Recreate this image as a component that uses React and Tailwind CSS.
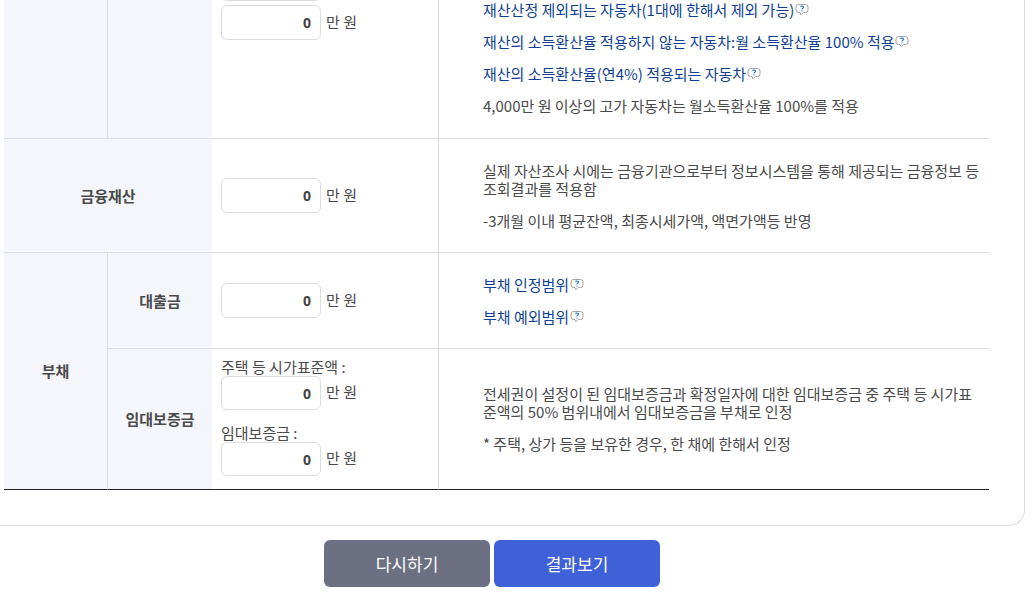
import { useState } from "react";

function HelpLink({ children }) {
  return (
    <a href="#help" className="flex items-start gap-px text-[#0f3f94]">
      <span>{children}</span>
      <svg width="14" height="12" viewBox="0 0 14 12" fill="none" className="mt-[3px] shrink-0" aria-hidden="true">
        <path
          d="M3.5 0.5h7a2.5 2.5 0 0 1 2.5 2.5v3a2.5 2.5 0 0 1-2.5 2.5H8.2L6 10.8 5 8.5H3.5A2.5 2.5 0 0 1 1 6V3A2.5 2.5 0 0 1 3.5 0.5z"
          fill="#fff"
          stroke="#a3a3a3"
        />
        <path d="M5.4 2.6C6.2 1.7 8.6 1.9 8.5 3.3C8.4 4.3 7 4.3 7 5.4M7 6.4v1.1" stroke="#2a7fd4" strokeWidth="1.2" />
      </svg>
    </a>
  );
}

function AmountInput({ id, label, compact, unit = "만 원" }) {
  const [value, setValue] = useState("0");

  return (
    <div className="flex items-center gap-[5px]">
      <input
        id={id}
        type="text"
        inputMode="numeric"
        aria-label={label}
        value={value}
        onChange={(e) => setValue(e.target.value)}
        className={`${compact ? "h-[34px]" : "h-[35px]"} w-[100px] rounded-md border border-[#dddddd] bg-white px-[9px] text-right font-['Noto_Sans',sans-serif] text-sm font-bold text-[#444444]`}
      />
      {unit && <span className="pb-0.5">{unit}</span>}
    </div>
  );
}

const headCell = "border-b border-[#dcdde1] bg-[#f5f6fc] text-center align-middle font-bold";
const inputCell = "border-r border-b border-[#dddddd] pl-[9px]";
const noteCell = "border-b border-[#dddddd] pl-11";

function App() {
  return (
    <main className="overflow-hidden bg-white font-['Noto_Sans_CJK_KR','Noto_Sans',sans-serif] text-[15px] leading-[18px] text-[#4a4a4a]">
      <section className="-mt-[34px] mr-2.5 rounded-br-2xl border-r border-b border-[#dddddd] pr-[35px] pb-[35px] pl-1">
        <table className="w-full table-fixed border-separate border-spacing-0">
          <colgroup>
            <col className="w-[104px]" />
            <col className="w-[104px]" />
            <col className="w-[227px]" />
            <col />
          </colgroup>
          <tbody>
            <tr className="h-[173px]">
              <td className={`${headCell} border-r`}></td>
              <td className={headCell}></td>
              <td className={`${inputCell} align-top`}>
                <div className="flex flex-col gap-1">
                  <AmountInput id="car1" label="자동차 1" unit="" />
                  <AmountInput id="car2" label="자동차 2" />
                </div>
              </td>
              <td className={`${noteCell} pt-[35px] align-top`}>
                <div className="flex flex-col gap-3.5">
                  <HelpLink>재산산정 제외되는 자동차(1대에 한해서 제외 가능)</HelpLink>
                  <HelpLink>재산의 소득환산율 적용하지 않는 자동차:월 소득환산율 100% 적용</HelpLink>
                  <HelpLink>재산의 소득환산율(연4%) 적용되는 자동차</HelpLink>
                  <p>4,000만 원 이상의 고가 자동차는 월소득환산율 100%를 적용</p>
                </div>
              </td>
            </tr>
            <tr className="h-[114px]">
              <th colSpan={2} scope="row" className={headCell}>
                금융재산
              </th>
              <td className={inputCell}>
                <AmountInput id="finance" label="금융재산" />
              </td>
              <td className={noteCell}>
                <div className="flex flex-col gap-3.5">
                  <p>
                    실제 자산조사 시에는 금융기관으로부터 정보시스템을 통해 제공되는 금융정보 등
                    <br />
                    조회결과를 적용함
                  </p>
                  <p>-3개월 이내 평균잔액, 최종시세가액, 액면가액등 반영</p>
                </div>
              </td>
            </tr>
            <tr className="h-24">
              <th rowSpan={2} scope="rowgroup" className={`${headCell} border-r border-b-[#222222]`}>
                부채
              </th>
              <th scope="row" className={headCell}>
                대출금
              </th>
              <td className={inputCell}>
                <AmountInput id="loan" label="대출금" />
              </td>
              <td className={noteCell}>
                <div className="flex flex-col gap-3.5">
                  <HelpLink>부채 인정범위</HelpLink>
                  <HelpLink>부채 예외범위</HelpLink>
                </div>
              </td>
            </tr>
            <tr className="h-[141px]">
              <th scope="row" className={`${headCell} border-b-[#222222]`}>
                임대보증금
              </th>
              <td className={`${inputCell} border-b-[#222222] pt-[9px] align-top`}>
                <label htmlFor="housePrice" className="block">
                  주택 등 시가표준액 :
                </label>
                <AmountInput id="housePrice" compact />
                <label htmlFor="deposit" className="mt-3.5 block">
                  임대보증금 :
                </label>
                <AmountInput id="deposit" compact />
              </td>
              <td className={`${noteCell} border-b-[#222222]`}>
                <div className="flex flex-col gap-3.5">
                  <p>
                    전세권이 설정이 된 임대보증금과 확정일자에 대한 임대보증금 중 주택 등 시가표
                    <br />
                    준액의 50% 범위내에서 임대보증금을 부채로 인정
                  </p>
                  <p>* 주택, 상가 등을 보유한 경우, 한 채에 한해서 인정</p>
                </div>
              </td>
            </tr>
          </tbody>
        </table>
      </section>

      <div className="mt-3.5 mb-6 flex justify-center gap-1 pr-[51px] text-[17px] text-white">
        <button type="button" className="h-[47px] w-[166px] cursor-pointer rounded-md bg-[#6d7083]">
          다시하기
        </button>
        <button type="button" className="h-[47px] w-[166px] cursor-pointer rounded-md bg-[#3e61d7]">
          결과보기
        </button>
      </div>
    </main>
  );
}

export default App;
